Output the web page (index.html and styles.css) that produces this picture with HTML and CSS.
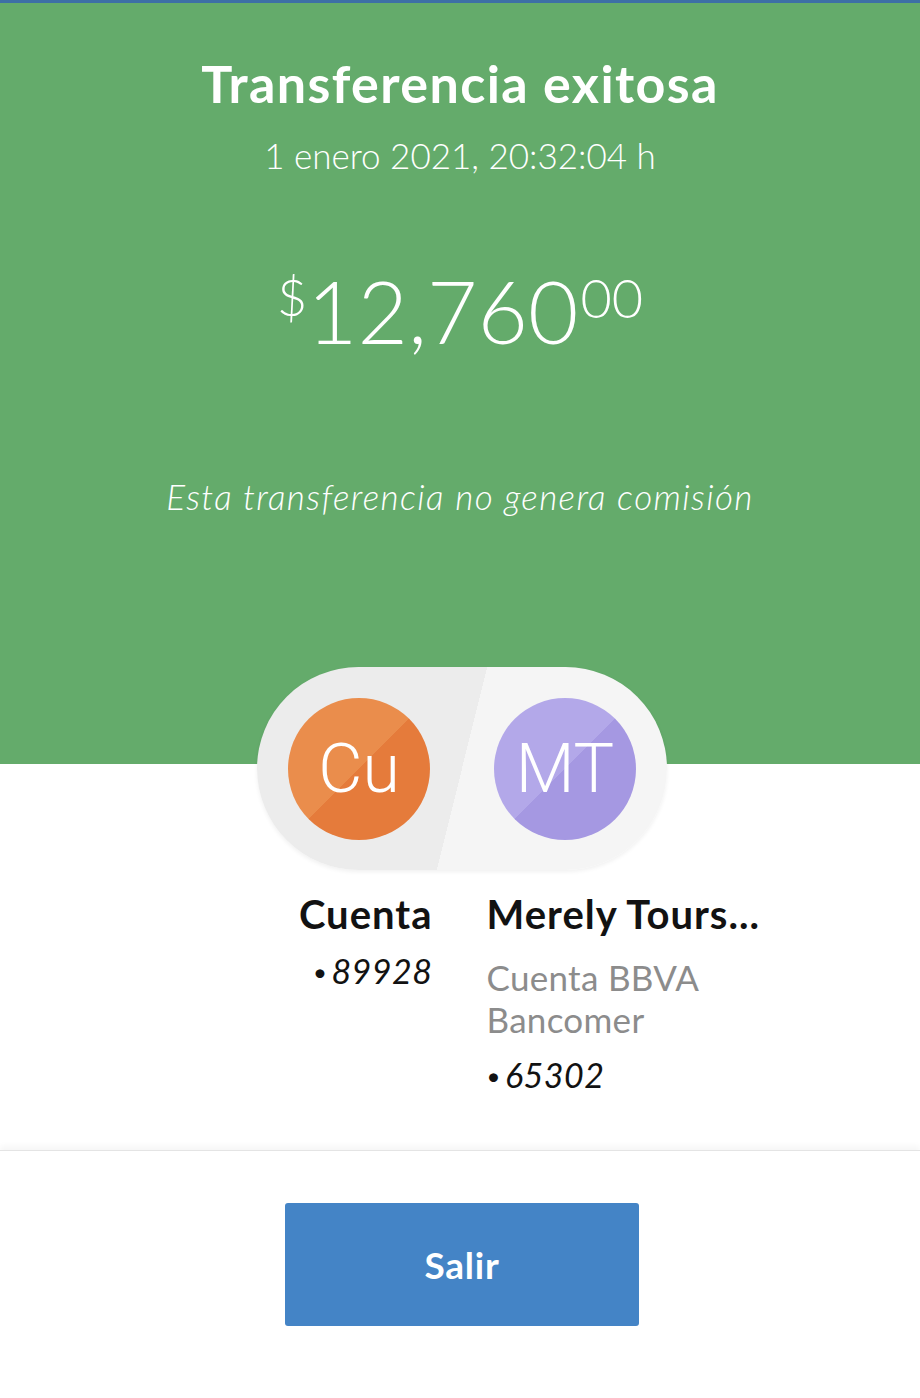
FILE: index.html
```html
<!DOCTYPE html>
<html lang="es">
<head>
    <meta charset="UTF-8">
    <meta name="viewport" content="width=device-width, initial-scale=1.0">
    <title>Transferencia exitosa</title>
    <link rel="stylesheet" href="styles.css">
</head>
<body>
    <div class="hero">
        <h1 class="title">Transferencia exitosa</h1>
        <div class="date">1 enero 2021, 20:32:04 h</div>
        <div class="amount">
            <span class="currency">$</span><span class="whole">12,760</span><span class="cents">00</span>
        </div>
        <div class="note">Esta transferencia no genera comisión</div>
    </div>

    <div class="parties">
        <div class="pill">
            <div class="avatar avatar-orange">Cu</div>
            <div class="avatar avatar-purple">MT</div>
        </div>

        <div class="accounts">
            <div class="account account-from">
                <div class="account-name">Cuenta</div>
                <div class="account-number"><span class="dot">•</span>89928</div>
            </div>
            <div class="account account-to">
                <div class="account-name">Merely Tours...</div>
                <div class="account-bank">Cuenta BBVA Bancomer</div>
                <div class="account-number"><span class="dot">•</span>65302</div>
            </div>
        </div>
    </div>

    <div class="footer">
        <button class="btn-primary">Salir</button>
    </div>
</body>
</html>
```

FILE: styles.css
```css
body {
    margin: 0;
    font-family: 'Lato', 'Open Sans', sans-serif;
    background: #ffffff;
    color: #121212;
}
.hero {
    background-color: #64ab6b;
    border-top: 3px solid #3d6fa6;
    padding: 54px 20px 248px;
    text-align: center;
    color: #ffffff;
}
.title {
    margin: 0;
    font-size: 52px;
    line-height: 52px;
    font-weight: 700;
    letter-spacing: 1.4px;
}
.date {
    margin-top: 26px;
    font-size: 35px;
    line-height: 40px;
    font-weight: 300;
}
.amount {
    margin-top: 86px;
    line-height: 100px;
    font-weight: 300;
    display: flex;
    justify-content: center;
    align-items: flex-start;
}
.currency {
    font-size: 52px;
    line-height: 70px;
}
.whole {
    font-size: 87px;
}
.cents {
    font-size: 54px;
    line-height: 74px;
    margin-left: 2px;
}
.note {
    margin-top: 115px;
    font-size: 35px;
    line-height: 40px;
    font-style: italic;
    font-weight: 300;
    letter-spacing: 1.4px;
}
.parties {
    margin-top: -97px;
    padding-bottom: 53px;
}
.pill {
    width: 410px;
    height: 203px;
    margin: 0 auto;
    position: relative;
    left: 2px;
    box-sizing: border-box;
    padding: 0 31px;
    border-radius: 102px;
    background: linear-gradient(104deg, #ececec 50%, #f5f5f5 50%);
    box-shadow: 0 2px 4px rgba(0,0,0,0.06);
    display: flex;
    align-items: center;
    justify-content: space-between;
}
.avatar {
    width: 142px;
    height: 142px;
    border-radius: 50%;
    display: flex;
    align-items: center;
    justify-content: center;
    color: #ffffff;
    font-family: 'Roboto', sans-serif;
    font-weight: 300;
    font-size: 68px;
}
.avatar-orange {
    background: linear-gradient(135deg, #ea8d4c 50%, #e57b3b 50%);
}
.avatar-purple {
    background: linear-gradient(135deg, #b3a8e9 50%, #a598e2 50%);
}
.accounts {
    display: grid;
    grid-template-columns: 1fr 1fr;
    column-gap: 53px;
    margin-top: 22px;
}
.account-from {
    text-align: right;
    padding-right: 1px;
}
.account-to {
    max-width: 290px;
}
.account-name {
    font-size: 40px;
    line-height: 44px;
    font-weight: 700;
    letter-spacing: 1px;
}
.account-number {
    margin-top: 14px;
    font-size: 34px;
    line-height: 42px;
    font-style: italic;
    letter-spacing: 0.5px;
}
.dot {
    font-style: normal;
    font-size: 24px;
    margin-right: 4px;
    vertical-align: 3px;
}
.account-bank {
    margin-top: 20px;
    font-size: 35px;
    line-height: 42px;
    color: #8c8c8c;
    letter-spacing: 0.3px;
}
.footer {
    padding: 52px 0 70px 4px;
    display: flex;
    justify-content: center;
    border-top: 1px solid #e4e4e4;
    box-shadow: 0 -4px 6px rgba(0,0,0,0.04);
}
button {
    font-family: inherit;
    border: none;
    cursor: pointer;
}
.btn-primary {
    width: 354px;
    height: 123px;
    border-radius: 3px;
    background-color: #4484c6;
    color: #ffffff;
    font-size: 37px;
    font-weight: 700;
    letter-spacing: 0.8px;
}
```
